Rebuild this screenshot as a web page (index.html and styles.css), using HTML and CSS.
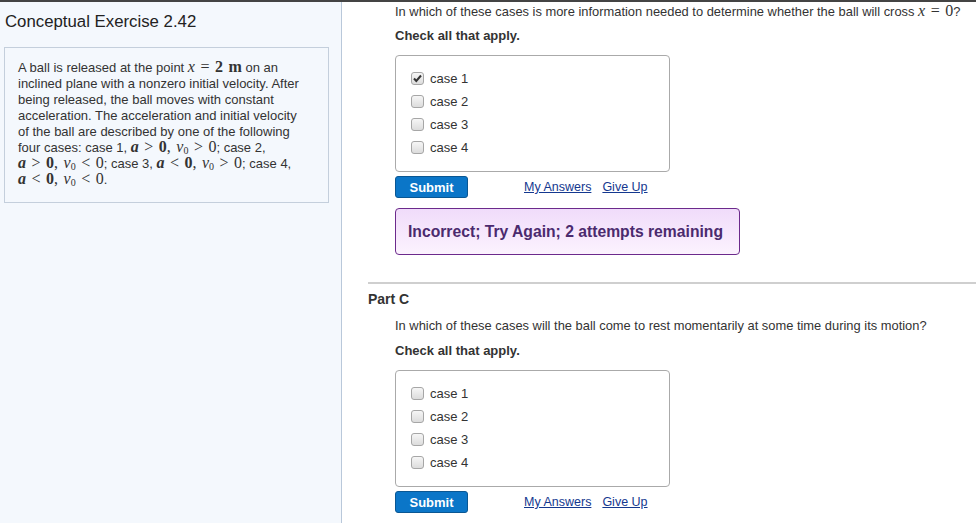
FILE: index.html
```html
<!DOCTYPE html>
<html>
<head>
	<title>Conceptual Exercise 2.42</title>
	<meta charset="utf-8">
	<meta name="viewport" content="width=device-width, initial-scale=1">
	<link rel="stylesheet" href="styles.css">
</head>
<body>

	<div class="topbar"></div>

	<div class="page">
		<aside class="sidebar">
			<h1 class="title">Conceptual Exercise 2.42</h1>
			<div class="problem">
				A ball is released at the point <span class="math"><i>x</i> = <b>2 m</b></span> on an inclined plane with a nonzero initial velocity. After being released, the ball moves with constant acceleration. The acceleration and initial velocity of the ball are described by one of the following four cases: case 1, <span class="math"><b><i>a</i></b> &gt; <b>0</b>, <i>v</i><sub>0</sub> &gt; 0</span>; case 2, <span class="math"><b><i>a</i></b> &gt; <b>0</b>, <i>v</i><sub>0</sub> &lt; 0</span>; case 3, <span class="math"><b><i>a</i></b> &lt; <b>0</b>, <i>v</i><sub>0</sub> &gt; 0</span>; case 4, <span class="math"><b><i>a</i></b> &lt; <b>0</b>, <i>v</i><sub>0</sub> &lt; 0</span>.
			</div>
		</aside>

		<main class="content">
			<div class="part">
				<div class="indent">
					<p class="question">In which of these cases is more information needed to determine whether the ball will cross <span class="math"><i>x</i> = 0</span>?</p>
					<p class="check-note">Check all that apply.</p>
					<div class="choices">
						<label class="choice"><span class="cb checked"><svg width="11" height="11" viewBox="0 0 11 11"><path d="M2 5.5 L4.3 8 L9 2.5" fill="none" stroke="#333" stroke-width="2"/></svg></span>case 1</label>
						<label class="choice"><span class="cb"></span>case 2</label>
						<label class="choice"><span class="cb"></span>case 3</label>
						<label class="choice"><span class="cb"></span>case 4</label>
					</div>
					<div class="actions">
						<button type="button" class="submit-btn">Submit</button>
						<a href="#" class="action-link">My Answers</a>
						<a href="#" class="action-link">Give Up</a>
					</div>
					<div class="feedback">Incorrect; Try Again; 2 attempts remaining</div>
				</div>
			</div>

			<hr class="divider">

			<div class="part">
				<h2 class="part-title">Part C</h2>
				<div class="indent">
					<p class="question">In which of these cases will the ball come to rest momentarily at some time during its motion?</p>
					<p class="check-note">Check all that apply.</p>
					<div class="choices">
						<label class="choice"><span class="cb"></span>case 1</label>
						<label class="choice"><span class="cb"></span>case 2</label>
						<label class="choice"><span class="cb"></span>case 3</label>
						<label class="choice"><span class="cb"></span>case 4</label>
					</div>
					<div class="actions">
						<button type="button" class="submit-btn">Submit</button>
						<a href="#" class="action-link">My Answers</a>
						<a href="#" class="action-link">Give Up</a>
					</div>
				</div>
			</div>
		</main>
	</div>

</body>
</html>
```

FILE: styles.css
```css
body{
	margin: 0;
	font-family: "Liberation Sans", Arial, sans-serif;
	color: #333;
	overflow: hidden;
}

.topbar{
	height: 2px;
	background-color: #444;
}

.page{
	display: flex;
	height: 521px;
}

/* left column with the problem text */
.sidebar{
	width: 337px;
	padding-left: 4px;
	background-color: #f4f8fd;
	border-right: 1px solid #b9c8da;
}

.title{
	margin: 10px 0 15px 1px;
	font-size: 16.8px;
	font-weight: normal;
	line-height: 20px;
	color: #222;
}

.problem{
	width: 325px;
	padding: 12px 20px 14px 13px;
	border: 1px solid #c4cfdc;
	box-sizing: border-box;
	font-size: 13px;
	line-height: 16px;
}

.math{
	font-family: "Liberation Serif", "Times New Roman", serif;
	font-size: 16px;
	line-height: 12px;
	word-spacing: 1.5px;
	white-space: nowrap;
}

.math sub{
	font-size: 10px;
	line-height: 0;
	vertical-align: -2px;
}

/* right column */
.content{
	flex: 1;
	padding: 2px 0 0 26px;
}

.indent{
	margin-left: 27px;
}

.question{
	margin: 0;
	font-size: 12.9px;
	line-height: 16px;
}

.check-note{
	margin: 8px 0 0 0;
	font-size: 13px;
	font-weight: bold;
	line-height: 16px;
}

.choices{
	width: 275px;
	height: 117px;
	margin-top: 11px;
	padding: 11px 0 11px 15px;
	border: 1px solid #aaa;
	border-radius: 4px;
	box-sizing: border-box;
}

.choice{
	display: flex;
	align-items: center;
	height: 23px;
	font-size: 13px;
}

.cb{
	display: inline-flex;
	align-items: center;
	justify-content: center;
	width: 11px;
	height: 11px;
	margin-right: 6px;
	border: 1px solid #a6a6a6;
	border-radius: 3px;
	background: linear-gradient(#f6f6f6, #dcdcdc);
}

.actions{
	display: flex;
	align-items: center;
	margin-top: 4px;
}

.submit-btn{
	width: 73px;
	height: 22px;
	margin-right: 56px;
	padding: 0;
	background-color: #0b76c8;
	border: 1px solid #0a5793;
	border-radius: 3px;
	color: white;
	font-family: "Liberation Sans", Arial, sans-serif;
	font-size: 13px;
	font-weight: bold;
}

.action-link{
	margin-right: 11px;
	color: #14388f;
	font-size: 12.5px;
}

.feedback{
	display: flex;
	align-items: center;
	width: 345px;
	height: 47px;
	margin-top: 10px;
	padding-left: 12px;
	box-sizing: border-box;
	border: 1px solid #6c2a8c;
	border-radius: 4px;
	background: linear-gradient(#f0dcfa, #fcf2fe);
	color: #4b2a6e;
	font-size: 15.7px;
	font-weight: bold;
}

.divider{
	margin: 27px 0 0 0;
	border: none;
	border-top: 2px solid #cfcfcf;
}

.part-title{
	margin: 7px 0 11px 0;
	font-size: 14px;
	line-height: 16px;
}

.part + .divider + .part .check-note{
	margin-top: 9px;
}
```
